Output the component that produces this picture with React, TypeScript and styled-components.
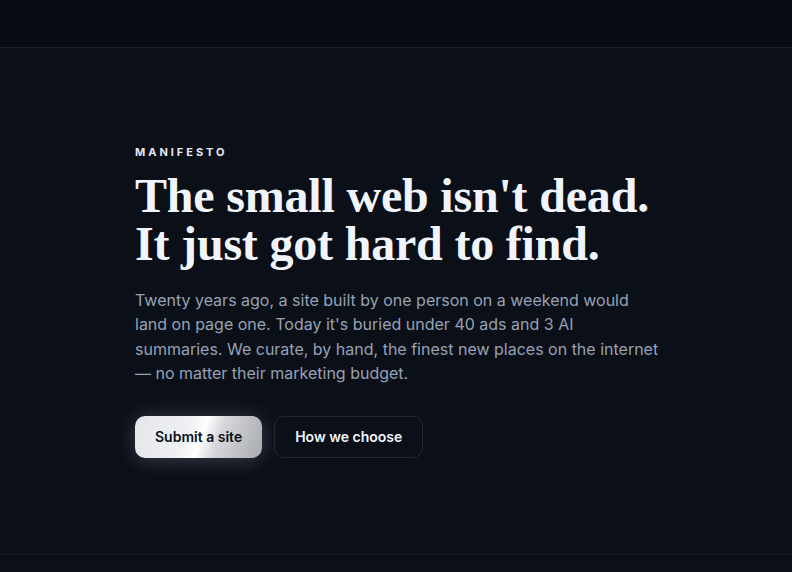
import React from "react";
import styled, { createGlobalStyle } from "styled-components";

const Global = createGlobalStyle`
  html, body { margin: 0; padding: 0; background: #0a0f18; }
  body { font-family: Inter, "Noto Sans", sans-serif; -webkit-font-smoothing: antialiased; }
  * { box-sizing: border-box; }
`;

const Page = styled.div`
  min-height: 572px;
  background: #0a0f18;
  display: flex;
  flex-direction: column;
`;

const TopBar = styled.header`
  height: 48px;
  background: #080c14;
  border-bottom: 1px solid #1a1f29;
`;

const Hero = styled.section`
  height: 507px;
  border-bottom: 1px solid #1a1d28;
  padding-top: 98px;
`;

const Container = styled.div`
  width: 522px;
  margin: 0 auto;
`;

const Eyebrow = styled.div`
  font-family: Inter, sans-serif;
  font-size: 11px;
  font-weight: 700;
  letter-spacing: 0.27em;
  color: #e6e9ef;
  line-height: 12px;
`;

const Title = styled.h1`
  margin: 14px 0 0;
  font-family: "Liberation Serif", "DejaVu Serif", serif;
  font-weight: 700;
  font-size: 48px;
  line-height: 48px;
  letter-spacing: -0.004em;
  color: #f1f5fb;
  white-space: nowrap;
`;

const Lead = styled.p`
  margin: 20px 0 0;
  width: 530px;
  font-family: Inter, sans-serif;
  font-size: 16px;
  line-height: 24.4px;
  color: #97a2b4;
`;

const Actions = styled.div`
  display: flex;
  gap: 12px;
  margin-top: 30px;
`;

const Button = styled.button<{ $primary?: boolean }>`
  height: 42px;
  padding: 0 20px;
  border-radius: 10px;
  font-family: Inter, sans-serif;
  font-size: 14px;
  font-weight: 600;
  cursor: pointer;
  ${(p) =>
    p.$primary
      ? `
    border: none;
    color: #0b0f17;
    background: linear-gradient(110deg, #e4e6ea 0%, #eef0f2 40%, #ffffff 52%, #d6d8dc 64%, #a7a9ad 100%);
    box-shadow: 0 0 22px rgba(255,255,255,0.16), 0 6px 20px rgba(255,255,255,0.06);
  `
      : `
    border: 1px solid #232833;
    color: #f4f6fa;
    background: transparent;
  `}
`;

export default function App() {
  return (
    <>
      <Global />
      <Page>
        <TopBar />
        <Hero>
          <Container>
            <Eyebrow>MANIFESTO</Eyebrow>
            <Title>
              The small web isn't dead.
              <br />
              It just got hard to find.
            </Title>
            <Lead>
              Twenty years ago, a site built by one person on a weekend would land on page one.
              Today it's buried under 40 ads and 3 AI summaries. We curate, by hand, the finest
              new places on the internet — no matter their marketing budget.
            </Lead>
            <Actions>
              <Button $primary>Submit a site</Button>
              <Button>How we choose</Button>
            </Actions>
          </Container>
        </Hero>
      </Page>
    </>
  );
}
